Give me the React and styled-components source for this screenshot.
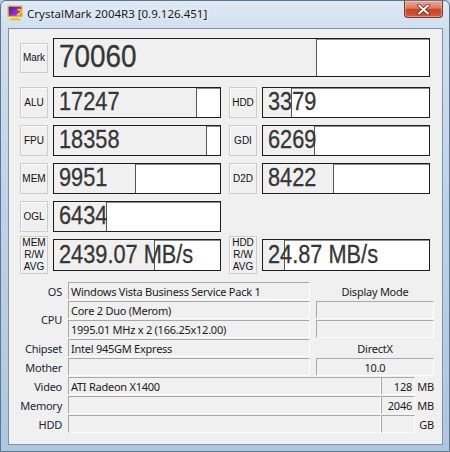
import styled, { createGlobalStyle } from "styled-components";

const GlobalStyle = createGlobalStyle`
  body {
    margin: 0;
    background: #b9cde3;
  }
`;

const Window = styled.div`
  width: 450px;
  height: 452px;
  display: flex;
  flex-direction: column;
  box-sizing: border-box;
  border: 1px solid #5f7590;
  border-radius: 6px 6px 0 0;
  overflow: hidden;
  background: linear-gradient(
    180deg,
    #dfe9f4 0px,
    #cfdeee 30px,
    #bfd3e8 200px,
    #aec6e0 452px
  );
`;

const TitleBar = styled.div`
  height: 27px;
  display: flex;
  align-items: flex-start;
  padding-left: 6px;
  flex-shrink: 0;
`;

const AppIcon = styled.svg`
  width: 16px;
  height: 16px;
  margin-top: 4px;
`;

const Title = styled.span`
  margin: 5px 0 0 4px;
  font-family: "Noto Sans", "Open Sans", sans-serif;
  font-size: 11.5px;
  color: #1b1b1b;
  white-space: nowrap;
  text-shadow: 0 0 6px #f4f8fc;
`;

const CloseButton = styled.div`
  margin-left: auto;
  margin-right: 6px;
  width: 39px;
  height: 17px;
  box-sizing: border-box;
  border: 1px solid #7a3428;
  border-top: none;
  border-radius: 0 0 4px 4px;
  display: flex;
  align-items: center;
  justify-content: center;
  background: linear-gradient(
    180deg,
    #eaa898 0%,
    #dd7a63 45%,
    #c8432a 52%,
    #d05a3f 100%
  );
  box-shadow: inset 0 0 0 1px rgba(255, 220, 210, 0.45);
`;

const Client = styled.div`
  margin: 0 6px 6px 7px;
  flex: 1;
  box-sizing: border-box;
  background: #f0f0f0;
  border: 1px solid #8092a8;
  padding: 9px 0 0 11px;
  display: flex;
  flex-direction: column;
`;

const BenchGrid = styled.div`
  display: grid;
  grid-template-columns: 201px 201px;
  column-gap: 8px;
  row-gap: 7px;
`;

const Bench = styled.div`
  display: flex;
  align-items: center;
  gap: 5px;
  height: ${(p) => p.$h}px;
  grid-column: ${(p) => (p.$wide ? "1 / 3" : "auto")};
  margin-bottom: ${(p) => (p.$wide ? 3 : 0)}px;
`;

const BenchLabel = styled.div`
  width: 28px;
  height: ${(p) => p.$h}px;
  flex-shrink: 0;
  box-sizing: border-box;
  border: 1px solid #cdcdcd;
  box-shadow: inset 1px 1px 0 #fbfbfb;
  display: flex;
  align-items: center;
  justify-content: center;
  text-align: center;
  font-family: "Liberation Sans", Arial, sans-serif;
  font-size: 10px;
  line-height: 12px;
  color: #111;
`;

const BarBox = styled.div`
  position: relative;
  flex: 1;
  height: 100%;
  box-sizing: border-box;
  border: 1px solid #1e1e1e;
  box-shadow: inset 1px 1px 0 #8c8c8c;
  background: #ffffff;
  display: flex;
`;

const BarFill = styled.div`
  height: 100%;
  box-sizing: border-box;
  background: #f0f0f0;
  border-right: 1px solid #555;
`;

const BarValue = styled.span`
  position: absolute;
  left: 5px;
  top: 0;
  bottom: ${(p) => (p.$big ? 1 : 2)}px;
  display: flex;
  align-items: center;
  font-family: "Liberation Sans", Arial, sans-serif;
  font-size: ${(p) => (p.$big ? 31 : 25)}px;
  color: #363636;
  white-space: nowrap;
  -webkit-text-stroke: 0.3px #363636;
  transform: scaleX(${(p) => (p.$big ? 0.9 : 0.87)});
  transform-origin: left center;
`;

const InfoGrid = styled.div`
  margin-top: 11px;
  display: grid;
  grid-template-columns: 42px 242px 118px;
  column-gap: 6px;
  grid-auto-rows: 18px;
  row-gap: 1px;
  font-family: "Noto Sans", "Open Sans", sans-serif;
  font-size: 11px;
  letter-spacing: -0.25px;
  color: #1b1b1b;
`;

const InfoLabel = styled.div`
  grid-row: ${(p) => (p.$span ? `span ${p.$span}` : "auto")};
  display: flex;
  align-items: center;
  justify-content: flex-end;
  white-space: nowrap;
  color: #1c2636;
`;

const Cell = styled.div`
  box-sizing: border-box;
  border: 1px solid;
  border-color: #a9a9a9 #ffffff #ffffff #a9a9a9;
  display: flex;
  align-items: center;
  justify-content: ${(p) => p.$align || "flex-start"};
  padding: 0 2px;
  white-space: nowrap;
  overflow: hidden;
  flex: ${(p) => (p.$grow ? 1 : "none")};
  width: ${(p) => (p.$w ? `${p.$w}px` : "auto")};
`;

const Caption = styled.div`
  display: flex;
  align-items: center;
  justify-content: center;
`;

const SplitRow = styled.div`
  grid-column: 2 / 4;
  display: flex;
`;

const Unit = styled.div`
  width: 19px;
  display: flex;
  align-items: center;
  justify-content: flex-end;
`;

const benches = [
  { label: "ALU", value: "17247", fill: 143 },
  { label: "HDD", value: "3379", fill: 29 },
  { label: "FPU", value: "18358", fill: 153 },
  { label: "GDI", value: "6269", fill: 52 },
  { label: "MEM", value: "9951", fill: 82 },
  { label: "D2D", value: "8422", fill: 71 },
  { label: "OGL", value: "6434", fill: 53 },
  null,
];

const averages = [
  { label: ["MEM", "R/W", "AVG"], value: "2439.07 MB/s", fill: 101 },
  { label: ["HDD", "R/W", "AVG"], value: "24.87 MB/s", fill: 22 },
];

function Bar({ value, fill, big }) {
  return (
    <BarBox>
      <BarFill style={{ width: fill }} />
      <BarValue $big={big}>{value}</BarValue>
    </BarBox>
  );
}

function Icon() {
  return (
    <AppIcon viewBox="0 0 16 16">
      <defs>
        <linearGradient id="scr" x1="0" y1="0" x2="1" y2="1">
          <stop offset="0" stopColor="#4a1aa8" />
          <stop offset="1" stopColor="#c43ee0" />
        </linearGradient>
      </defs>
      <rect x="0.5" y="0.5" width="15" height="11.5" fill="#e8b424" />
      <rect x="1.8" y="1.8" width="12.4" height="9" fill="url(#scr)" />
      <path d="M4 13h8l2 2.5H2z" fill="#f0c030" />
      <path
        d="M10.5 5.2a2 2 0 1 1 1.4 3.3l-1 1.2h2.6"
        fill="none"
        stroke="#ffd21f"
        strokeWidth="1.6"
      />
    </AppIcon>
  );
}

export default function App() {
  return (
    <>
      <GlobalStyle />
      <Window>
        <TitleBar>
          <Icon />
          <Title>CrystalMark 2004R3 [0.9.126.451]</Title>
          <CloseButton>
            <svg width="13" height="11" viewBox="0 0 13 11">
              <path
                d="M2 1.5l9 8M11 1.5l-9 8"
                stroke="#6b2418"
                strokeWidth="3.6"
                strokeLinecap="round"
              />
              <path
                d="M2 1.5l9 8M11 1.5l-9 8"
                stroke="#ffffff"
                strokeWidth="2"
                strokeLinecap="round"
              />
            </svg>
          </CloseButton>
        </TitleBar>

        <Client>
          <BenchGrid>
            <Bench $wide $h={39}>
              <BenchLabel $h={30}>Mark</BenchLabel>
              <Bar value="70060" fill={263} big />
            </Bench>

            {benches.map((b, i) =>
              b ? (
                <Bench key={b.label} $h={31}>
                  <BenchLabel $h={31}>{b.label}</BenchLabel>
                  <Bar value={b.value} fill={b.fill} />
                </Bench>
              ) : (
                <div key={i} />
              )
            )}

            {averages.map((a) => (
              <Bench key={a.label[0]} $h={32}>
                <BenchLabel $h={38}>
                  {a.label[0]}
                  <br />
                  {a.label[1]}
                  <br />
                  {a.label[2]}
                </BenchLabel>
                <Bar value={a.value} fill={a.fill} />
              </Bench>
            ))}
          </BenchGrid>

          <InfoGrid>
            <InfoLabel>OS</InfoLabel>
            <Cell>Windows Vista Business Service Pack 1</Cell>
            <Caption>Display Mode</Caption>

            <InfoLabel $span={2}>CPU</InfoLabel>
            <Cell>Core 2 Duo (Merom)</Cell>
            <Cell />
            <Cell>1995.01 MHz x 2 (166.25x12.00)</Cell>
            <Cell />

            <InfoLabel>Chipset</InfoLabel>
            <Cell>Intel 945GM Express</Cell>
            <Caption>DirectX</Caption>

            <InfoLabel>Mother</InfoLabel>
            <Cell />
            <Cell $align="center">10.0</Cell>

            <InfoLabel>Video</InfoLabel>
            <SplitRow>
              <Cell $grow>ATI Radeon X1400</Cell>
              <Cell $w={34} $align="flex-end">
                128
              </Cell>
              <Unit>MB</Unit>
            </SplitRow>

            <InfoLabel>Memory</InfoLabel>
            <SplitRow>
              <Cell $grow />
              <Cell $w={34} $align="flex-end">
                2046
              </Cell>
              <Unit>MB</Unit>
            </SplitRow>

            <InfoLabel>HDD</InfoLabel>
            <SplitRow>
              <Cell $grow />
              <Cell $w={34} $align="flex-end" />
              <Unit>GB</Unit>
            </SplitRow>
          </InfoGrid>
        </Client>
      </Window>
    </>
  );
}
